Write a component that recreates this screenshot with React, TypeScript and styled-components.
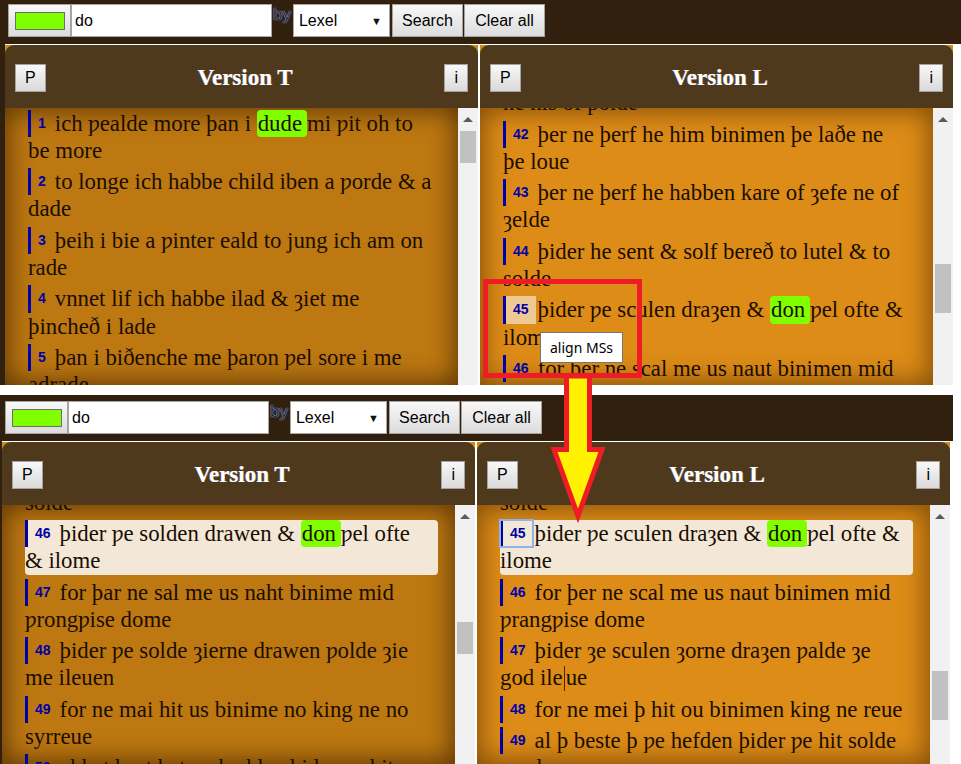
import React from "react";
import styled, { createGlobalStyle } from "styled-components";

const Global = createGlobalStyle`
  html, body { margin: 0; padding: 0; background: #fff; }
  #root { width: 961px; height: 764px; }
`;

const serif = `"Liberation Serif", "DejaVu Serif", serif`;
const sans = `"Liberation Sans", Arial, sans-serif`;

const Page = styled.div`
  position: relative;
  width: 961px;
  height: 764px;
  overflow: hidden;
  background: #fff;
`;

const Shot = styled.div<{ $w: number; $h: number; $dx: number; $mt: number }>`
  width: ${(p) => p.$w}px;
  height: ${(p) => p.$h}px;
  margin-left: ${(p) => p.$dx}px;
  margin-top: ${(p) => p.$mt}px;
  display: flex;
  flex-direction: column;
  overflow: hidden;
  background: #fff;
`;

const Toolbar = styled.div<{ $h: number; $pt: number }>`
  height: ${(p) => p.$h}px;
  box-sizing: border-box;
  padding: ${(p) => p.$pt}px 0 0 8px;
  background: #32200f;
  display: flex;
  align-items: flex-start;
  flex-shrink: 0;
`;

const ControlButton = styled.button<{ $w: number; $ml?: number }>`
  width: ${(p) => p.$w}px;
  height: 33px;
  margin-left: ${(p) => p.$ml ?? 0}px;
  box-sizing: border-box;
  border: 1px solid #a3a3a3;
  background: linear-gradient(#f8f8f8, #dcdcdc);
  font: 16px ${sans};
  color: #000;
  padding: 0;
  display: flex;
  align-items: center;
  justify-content: center;
`;

const Swatch = styled.span`
  width: 50px;
  height: 18px;
  box-sizing: border-box;
  border: 1px solid #6d6d6d;
  background: #80ff00;
`;

const SearchInput = styled.input`
  width: 201px;
  height: 33px;
  box-sizing: border-box;
  border: 1px solid #a6a6a6;
  background: #fff;
  font: 16px ${sans};
  color: #000;
  padding: 0 3px;
  margin: 0;
  outline: none;
`;

const ByLabel = styled.span`
  font: 17px ${sans};
  line-height: 17px;
  margin: 2px 2px 0 1px;
  color: #1d2748;
  text-shadow: 0 0 1px #a8b8dc, 0 0 1px #a8b8dc;
`;

const SelectBox = styled.div`
  width: 97px;
  height: 33px;
  box-sizing: border-box;
  border: 1px solid #a6a6a6;
  background: #fff;
  font: 16px ${sans};
  color: #000;
  display: flex;
  align-items: center;
  justify-content: space-between;
  padding: 0 7px 0 5px;
`;

const SelectArrow = styled.span`
  font-size: 11px;
  color: #111;
`;

const Row = styled.div<{ $w: number; $pl: number }>`
  flex: 1;
  min-height: 0;
  width: ${(p) => p.$w}px;
  box-sizing: border-box;
  padding-left: ${(p) => p.$pl}px;
  display: flex;
  background: #32200f;
`;

const Panel = styled.section`
  width: 473px;
  display: flex;
  flex-direction: column;
  background: #d08a1c;
  border-top: 1px solid #fff;
  min-height: 0;
`;

const Divider = styled.div`
  width: 2px;
  background: #fff;
  flex-shrink: 0;
`;

const Header = styled.header`
  height: 63px;
  flex-shrink: 0;
  box-sizing: border-box;
  background: #4f391d;
  border-radius: 9px 9px 0 0;
  display: flex;
  align-items: center;
  justify-content: space-between;
  padding: 2px 10px 0;
`;

const Title = styled.h2`
  margin: 0;
  font: bold 23px ${serif};
  color: #fff;
  text-shadow: -0.5px 0 0 rgba(120, 160, 255, 0.6), 0.5px 0 0 rgba(255, 200, 120, 0.5);
`;

const HeadButton = styled.button`
  height: 28px;
  box-sizing: border-box;
  padding: 0 9px;
  border: 1px solid #a3a3a3;
  background: linear-gradient(#f8f8f8, #dadada);
  font: 16px ${sans};
  color: #000;
`;

const Body = styled.div`
  flex: 1;
  min-height: 0;
  display: flex;
`;

const TextPane = styled.div<{ $tone: "dark" | "light" }>`
  flex: 1;
  min-width: 0;
  overflow: hidden;
  box-sizing: border-box;
  padding: 0 17px 0 23px;
  background: ${(p) => (p.$tone === "dark" ? "#be7811" : "#dd8c17")};
  box-shadow: inset 0 0 26px 3px
    ${(p) => (p.$tone === "dark" ? "rgba(60, 34, 0, 0.75)" : "rgba(90, 50, 0, 0.7)")};
`;

const VerseList = styled.div<{ $offset: number }>`
  margin-top: ${(p) => p.$offset}px;
`;

const Verse = styled.div<{ $hl?: boolean }>`
  font: 22.8px/27.3px ${serif};
  color: #1a0e00;
  margin-bottom: 4px;
  padding-right: 8px;
  border-radius: 4px;
  background: ${(p) => (p.$hl ? "#f3e7d8" : "transparent")};
`;

const Num = styled.span<{ $mode?: "plain" | "tan" | "focus" }>`
  display: inline-block;
  vertical-align: top;
  height: 27.3px;
  font: bold 14px ${sans};
  line-height: 27.3px;
  border-left: 3px solid #0000a8;
  padding: 0 7px;
  margin-right: 2px;
  color: #0000a8;
  background: ${(p) => (p.$mode === "tan" ? "#efc994" : "transparent")};
  outline: ${(p) => (p.$mode === "focus" ? "2px solid #8fb4ea" : "none")};
  outline-offset: -1px;
`;

const Mark = styled.span`
  display: inline-block;
  vertical-align: top;
  height: 27.3px;
  line-height: 27.3px;
  background: #80ff00;
  border-radius: 4px;
  padding: 0 5px 0 1px;
`;

const Caret = styled.span`
  display: inline-block;
  width: 1px;
  height: 25px;
  vertical-align: -6px;
  background: #4a2605;
  margin: 0 1px;
`;

const Scroll = styled.div`
  width: 20px;
  flex-shrink: 0;
  background: #f1f1f1;
  display: flex;
  flex-direction: column;
  align-items: center;
`;

const UpArrow = styled.div`
  width: 0;
  height: 0;
  margin-top: 9px;
  margin-bottom: 3px;
  border-left: 5px solid transparent;
  border-right: 5px solid transparent;
  border-bottom: 5px solid #5a5a5a;
`;

const Thumb = styled.div<{ $top: number; $h: number }>`
  width: 16px;
  height: ${(p) => p.$h}px;
  margin-top: ${(p) => p.$top}px;
  background: #c1c1c1;
`;

const Overlay = styled.svg`
  position: absolute;
  left: 0;
  top: 0;
  pointer-events: none;
`;

const Tooltip = styled.div`
  position: absolute;
  left: 540px;
  top: 332px;
  height: 31px;
  box-sizing: border-box;
  padding: 0 9px;
  border: 1px solid #767676;
  background: #fff;
  font: 14px "Noto Sans", "Open Sans", sans-serif;
  line-height: 29px;
  color: #000;
`;

type VerseData = { n: number; text: string; hl?: boolean; mode?: "plain" | "tan" | "focus" };

type PanelData = {
  title: string;
  tone: "dark" | "light";
  offset: number;
  thumbTop: number;
  thumbH: number;
  verses: VerseData[];
};

function renderText(text: string) {
  const parts = text.split(/(\[[^\]]+\]|\|)/);
  return parts.map((part, i) => {
    if (part === "|") return <Caret key={i} />;
    if (part.startsWith("[")) return <Mark key={i}>{part.slice(1, -1)}</Mark>;
    return <React.Fragment key={i}>{part}</React.Fragment>;
  });
}

function TextPanel({ data }: { data: PanelData }) {
  return (
    <Panel>
      <Header>
        <HeadButton>P</HeadButton>
        <Title>{data.title}</Title>
        <HeadButton>i</HeadButton>
      </Header>
      <Body>
        <TextPane $tone={data.tone}>
          <VerseList $offset={data.offset}>
            {data.verses.map((v) => (
              <Verse key={v.n} $hl={v.hl}>
                <Num $mode={v.mode}>{v.n}</Num>
                {renderText(v.text)}
              </Verse>
            ))}
          </VerseList>
        </TextPane>
        <Scroll>
          <UpArrow />
          <Thumb $top={data.thumbTop} $h={data.thumbH} />
        </Scroll>
      </Body>
    </Panel>
  );
}

function SearchBar({ h, pt }: { h: number; pt: number }) {
  return (
    <Toolbar $h={h} $pt={pt}>
      <ControlButton $w={63}>
        <Swatch />
      </ControlButton>
      <SearchInput defaultValue="do" readOnly />
      <ByLabel>by</ByLabel>
      <SelectBox>
        <span>Lexel</span>
        <SelectArrow>▼</SelectArrow>
      </SelectBox>
      <ControlButton $w={71} $ml={2}>Search</ControlButton>
      <ControlButton $w={81} $ml={1}>Clear all</ControlButton>
    </Toolbar>
  );
}

const v44L: VerseData = { n: 44, text: "þider he sent & solf bereð to lutel & to solde" };
const v46L: VerseData = { n: 46, text: "for þer ne scal me us naut binimen mid ƿrangƿise dome" };

const topLeft: PanelData = {
  title: "Version T",
  tone: "dark",
  offset: 1.5,
  thumbTop: 6,
  thumbH: 32,
  verses: [
    { n: 1, text: "ich ƿealde more þan i [dude]mi ƿit oh to be more" },
    { n: 2, text: "to longe ich habbe child iben a ƿorde & a dade" },
    { n: 3, text: "þeih i bie a ƿinter eald to jung ich am on rade" },
    { n: 4, text: "vnnet lif ich habbe ilad & ȝiet me þincheð i lade" },
    { n: 5, text: "þan i biðenche me þaron ƿel sore i me adrade" },
    { n: 6, text: "mest al þat ich habbe idon is idelnesse & chilce" },
  ],
};

const topRight: PanelData = {
  title: "Version L",
  tone: "light",
  offset: -46.1,
  thumbTop: 139,
  thumbH: 49,
  verses: [
    { n: 41, text: "ne mei his ahte him helpen ne his gold ne his of þolde" },
    { n: 42, text: "þer ne þerf he him binimen þe laðe ne þe loue" },
    { n: 43, text: "þer ne þerf he habben kare of ȝefe ne of ȝelde" },
    v44L,
    { n: 45, text: "þider ƿe sculen draȝen & [don]ƿel ofte & ilome", mode: "tan" },
    v46L,
  ],
};

const bottomLeft: PanelData = {
  title: "Version T",
  tone: "dark",
  offset: -43.6,
  thumbTop: 100,
  thumbH: 32,
  verses: [
    { n: 45, text: "þider he sendeð & bereð to lutel & to solde" },
    { n: 46, text: "þider ƿe solden drawen & [don]ƿel ofte & ilome", hl: true },
    { n: 47, text: "for þar ne sal me us naht binime mid ƿrongƿise dome" },
    { n: 48, text: "þider ƿe solde ȝierne drawen ƿolde ȝie me ileuen" },
    { n: 49, text: "for ne mai hit us binime no king ne no syrreue" },
    { n: 50, text: "al þat best þat ƿe hadden þider ƿe hit solde sende" },
  ],
};

const bottomRight: PanelData = {
  title: "Version L",
  tone: "light",
  offset: -43.6,
  thumbTop: 149,
  thumbH: 49,
  verses: [
    v44L,
    { n: 45, text: "þider ƿe sculen draȝen & [don]ƿel ofte & ilome", hl: true, mode: "focus" },
    v46L,
    { n: 47, text: "þider ȝe sculen ȝorne draȝen ƿalde ȝe god ile|ue" },
    { n: 48, text: "for ne mei þ hit ou binimen king ne reue" },
    { n: 49, text: "al þ beste þ ƿe hefden þider ƿe hit solde sende" },
  ],
};

export default function App() {
  return (
    <Page>
      <Global />
      <Shot $w={961} $h={385} $dx={0} $mt={0}>
        <SearchBar h={44} pt={4} />
        <Row $w={953} $pl={5}>
          <TextPanel data={topLeft} />
          <Divider />
          <TextPanel data={topRight} />
        </Row>
      </Shot>
      <Shot $w={956} $h={369} $dx={-3} $mt={10}>
        <SearchBar h={46} pt={6} />
        <Row $w={953} $pl={5}>
          <TextPanel data={bottomLeft} />
          <Divider />
          <TextPanel data={bottomRight} />
        </Row>
      </Shot>
      <Tooltip>align MSs</Tooltip>
      <Overlay width={961} height={764} viewBox="0 0 961 764">
        <rect x={485.5} y={281.5} width={154} height={94} fill="none" stroke="#ee1c24" strokeWidth={5} />
        <polygon
          points="566.5,376 589.5,376 589.5,449.5 602,449.5 578,516 554,449.5 566.5,449.5"
          fill="#fff200"
          stroke="#ee1c24"
          strokeWidth={5}
          strokeLinejoin="miter"
        />
      </Overlay>
    </Page>
  );
}
